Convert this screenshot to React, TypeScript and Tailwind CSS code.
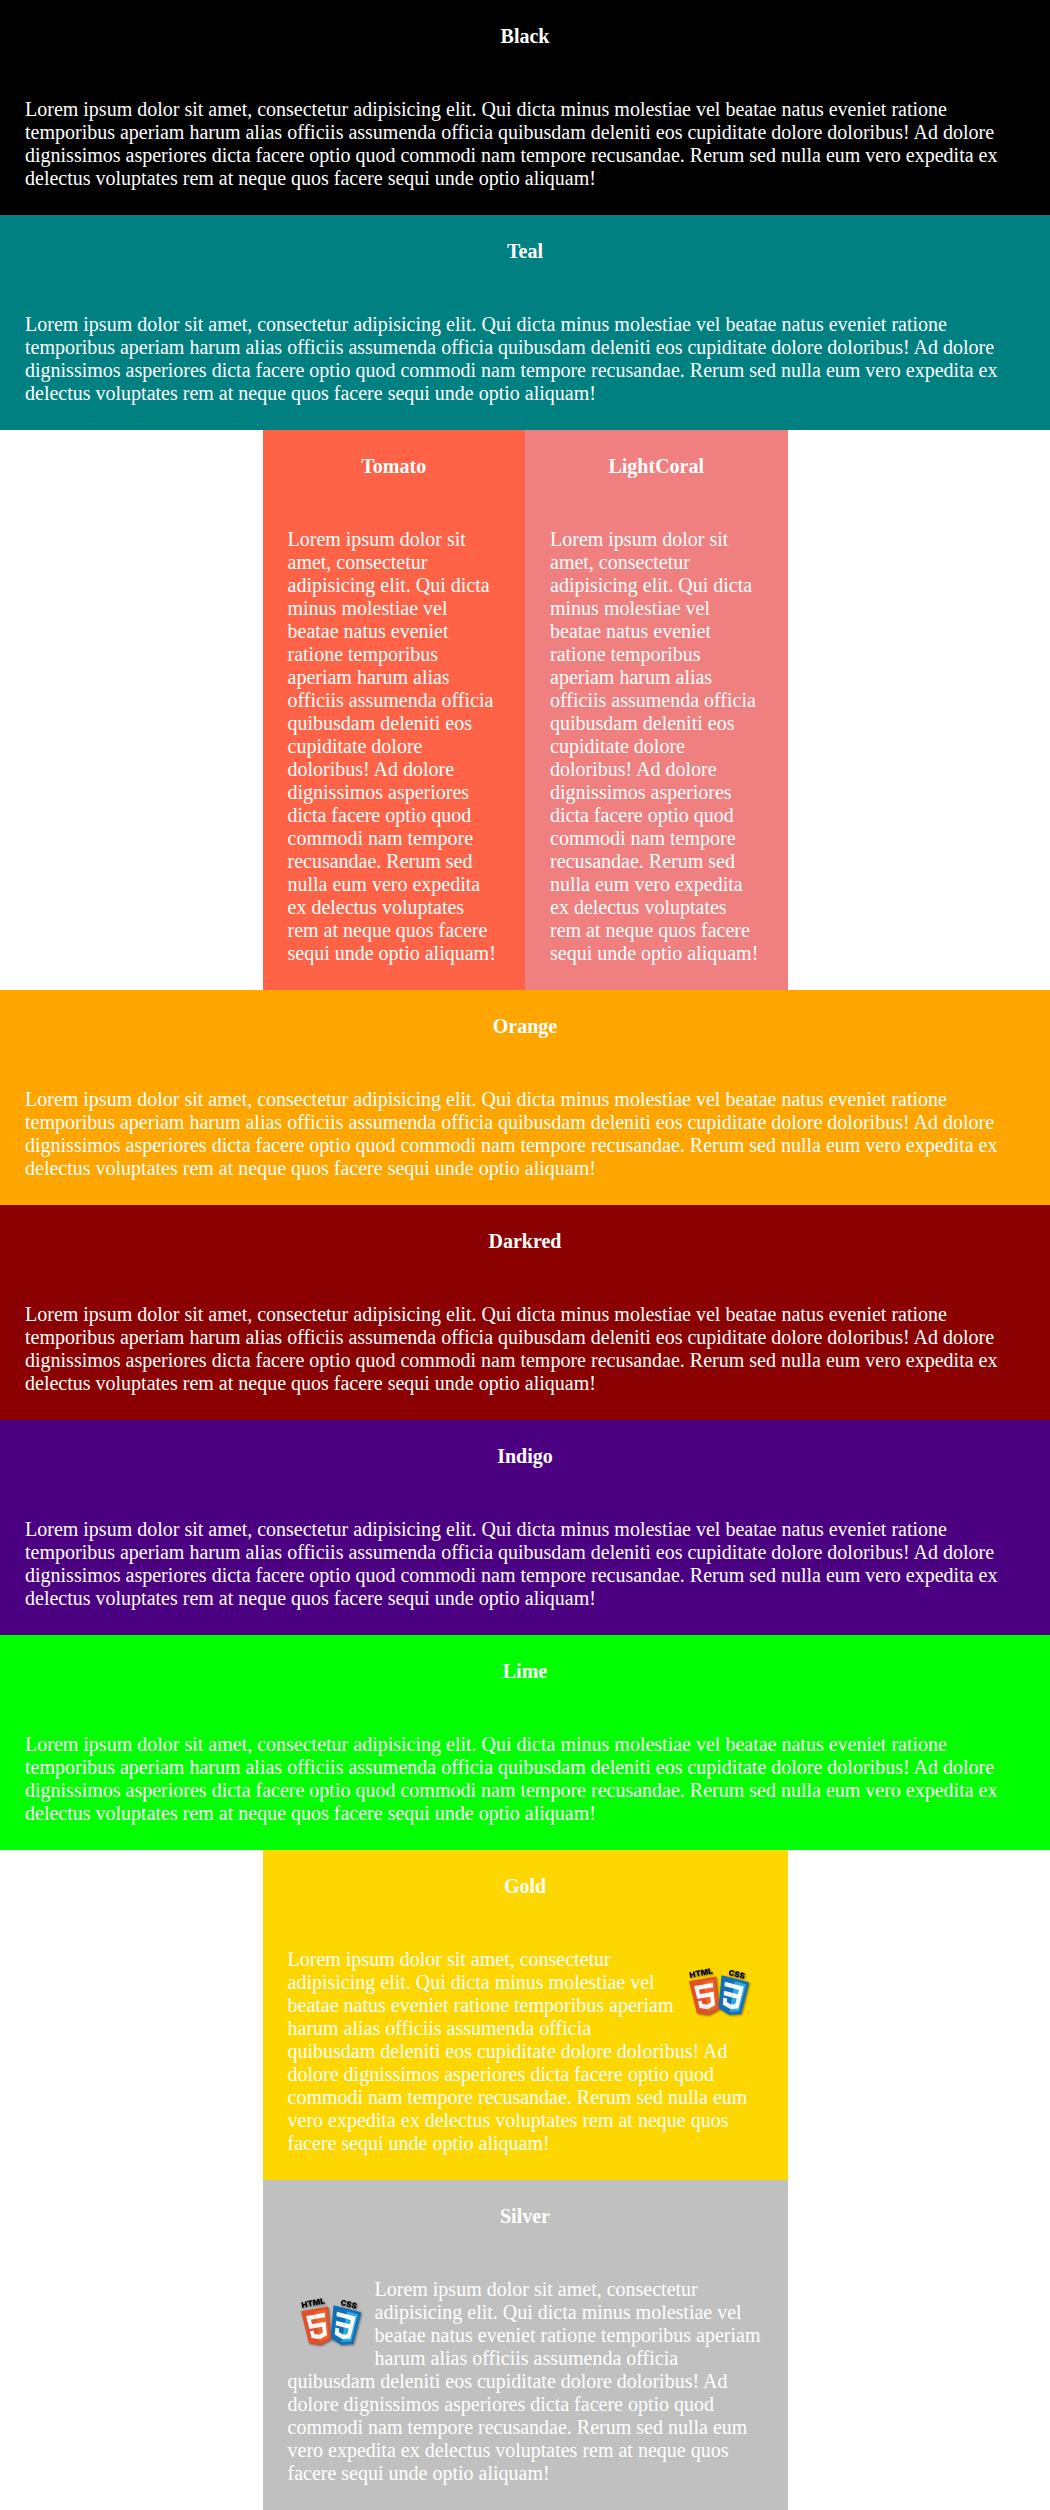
import type { ReactNode } from 'react';

const LOREM =
  'Lorem ipsum dolor sit amet, consectetur adipisicing elit. Qui dicta minus molestiae vel beatae natus eveniet ratione temporibus aperiam harum alias officiis assumenda officia quibusdam deleniti eos cupiditate dolore doloribus! Ad dolore dignissimos asperiores dicta facere optio quod commodi nam tempore recusandae. Rerum sed nulla eum vero expedita ex delectus voluptates rem at neque quos facere sequi unde optio aliquam!';

function Logo({ className }: { className: string }) {
  return (
    <svg
      role="img"
      aria-label="HTML5 and CSS3"
      viewBox="0 0 87 80"
      className={`h-20 w-[87px] ${className}`}
    >
      <g className="drop-shadow-[1px_1px_1px_rgba(0,0,0,0.5)]" transform="translate(4 6)">
        <g transform="matrix(0.061 0.0153 -0.012 0.0704 39.7 20.8)">
          <path fill="#0f70b7" d="M71 460 30 0h451l-41 460-185 52z" />
          <path fill="#2ba9e0" d="m256 472 149-41 35-394H256z" />
          <g transform="matrix(1.1 0 0 1.1 -26 -25)">
            <path
              fill="#f4f4f4"
              d="M257 94v56H120l-6-56zM257 208v56H130l-5-56zM257 355v59l-117-32-8-89h56l4 45z"
            />
            <path
              fill="#fff"
              d="M255 94h142l-26 288-116 32v-59l63-17 7-74h-70v-56h76l4-58h-80z"
            />
          </g>
        </g>
        <g transform="matrix(0.06 -0.0106 0.012 0.0704 7.2 27.6)">
          <path fill="#e34f26" d="M71 460 30 0h451l-41 460-185 52z" />
          <path fill="#ef652a" d="m256 472 149-41 35-394H256z" />
          <g transform="matrix(1.1 0 0 1.1 -26 -25)">
            <path
              fill="#f4f4f4"
              d="M257 208h-76l-5-58h81V94H114l15 170h128zM257 355l-65-17-4-45h-56l7 89 118 32z"
            />
            <path
              fill="#fff"
              d="M255 208v56h70l-7 74-63 17v59l116-32 16-174zM255 94v56h137l5-56z"
            />
          </g>
        </g>
        <text
          transform="translate(10 24) rotate(-11)"
          className="fill-black font-['Inter',sans-serif] text-[8px] font-black"
        >
          HTML
        </text>
        <text
          transform="translate(48 21) rotate(14)"
          className="fill-black font-['Inter',sans-serif] text-[8px] font-black"
        >
          CSS
        </text>
      </g>
    </svg>
  );
}

function Panel({ title, className, children }: { title: string; className: string; children?: ReactNode }) {
  return (
    <section className={className}>
      <h2 className="p-[25px] text-center font-bold">{title}</h2>
      <div className="p-[25px]">
        {children}
        <p>{LOREM}</p>
      </div>
    </section>
  );
}

export default function App() {
  return (
    <main className="bg-white font-['Liberation_Serif','Times_New_Roman',serif] text-[20px] leading-[23px] text-white">
      <Panel title="Black" className="bg-black" />
      <Panel title="Teal" className="bg-[#008080]" />
      <div className="mx-auto grid w-1/2 grid-cols-2">
        <Panel title="Tomato" className="bg-[#ff6347]" />
        <Panel title="LightCoral" className="bg-[#f08080]" />
      </div>
      <Panel title="Orange" className="bg-[#ffa500]" />
      <Panel title="Darkred" className="bg-[#8b0000]" />
      <Panel title="Indigo" className="bg-[#4b0082]" />
      <Panel title="Lime" className="bg-[#00ff00]" />
      <div className="mx-auto w-1/2">
        <Panel title="Gold" className="bg-[#ffd700]">
          <Logo className="float-right" />
        </Panel>
        <Panel title="Silver" className="bg-[#c0c0c0]">
          <Logo className="float-left" />
        </Panel>
      </div>
    </main>
  );
}
